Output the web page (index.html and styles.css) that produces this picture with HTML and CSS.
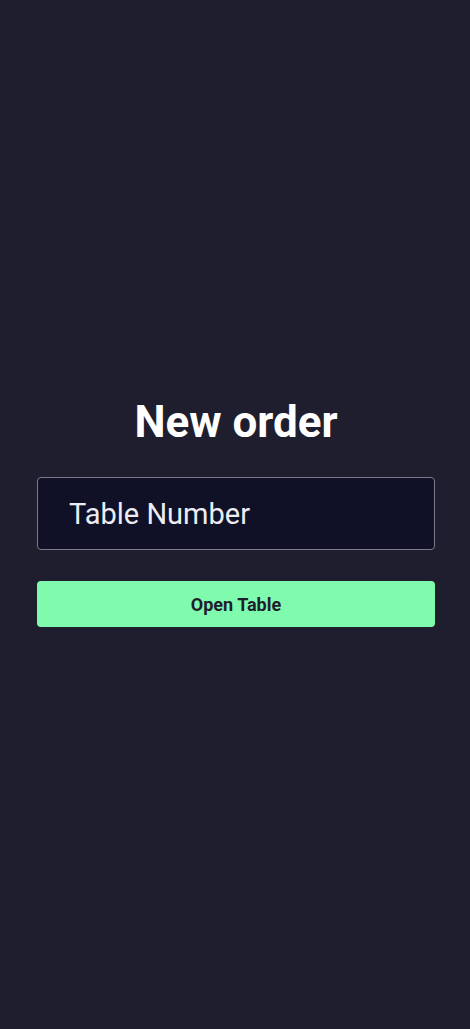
FILE: index.html
```html
<!DOCTYPE html>
<html lang="en">
<head>
<meta charset="utf-8">
<title>New order</title>
<link rel="stylesheet" href="styles.css">
</head>
<body>
<main class="screen">
  <h1 class="title">New order</h1>
  <div class="field"><span class="field-text">Table Number</span></div>
  <button class="btn">Open Table</button>
</main>
</body>
</html>
```
FILE: styles.css
```css
html, body {
  margin: 0;
  padding: 0;
  background: #1f1e2e;
}
.screen {
  min-height: 1029px;
  box-sizing: border-box;
  display: flex;
  flex-direction: column;
  justify-content: center;
  padding: 0 35px 6px 37px;
  font-family: Roboto, "Liberation Sans", sans-serif;
}
.title {
  margin: 0 0 29px;
  text-align: center;
  color: #ffffff;
  font-size: 44px;
  font-weight: 700;
  line-height: 52px;
}
.field {
  height: 73px;
  box-sizing: border-box;
  border: 1px solid #7b7a86;
  border-radius: 4px;
  background: #101026;
  display: flex;
  align-items: center;
  padding-left: 31px;
}
.field-text {
  color: #ececf2;
  font-size: 29px;
  line-height: 32px;
}
.btn {
  margin-top: 31px;
  height: 46px;
  border: none;
  border-radius: 4px;
  background: #80fbae;
  color: #1f1e2e;
  font-family: Roboto, "Liberation Sans", sans-serif;
  font-size: 18px;
  font-weight: 700;
  padding: 0;
}
```
